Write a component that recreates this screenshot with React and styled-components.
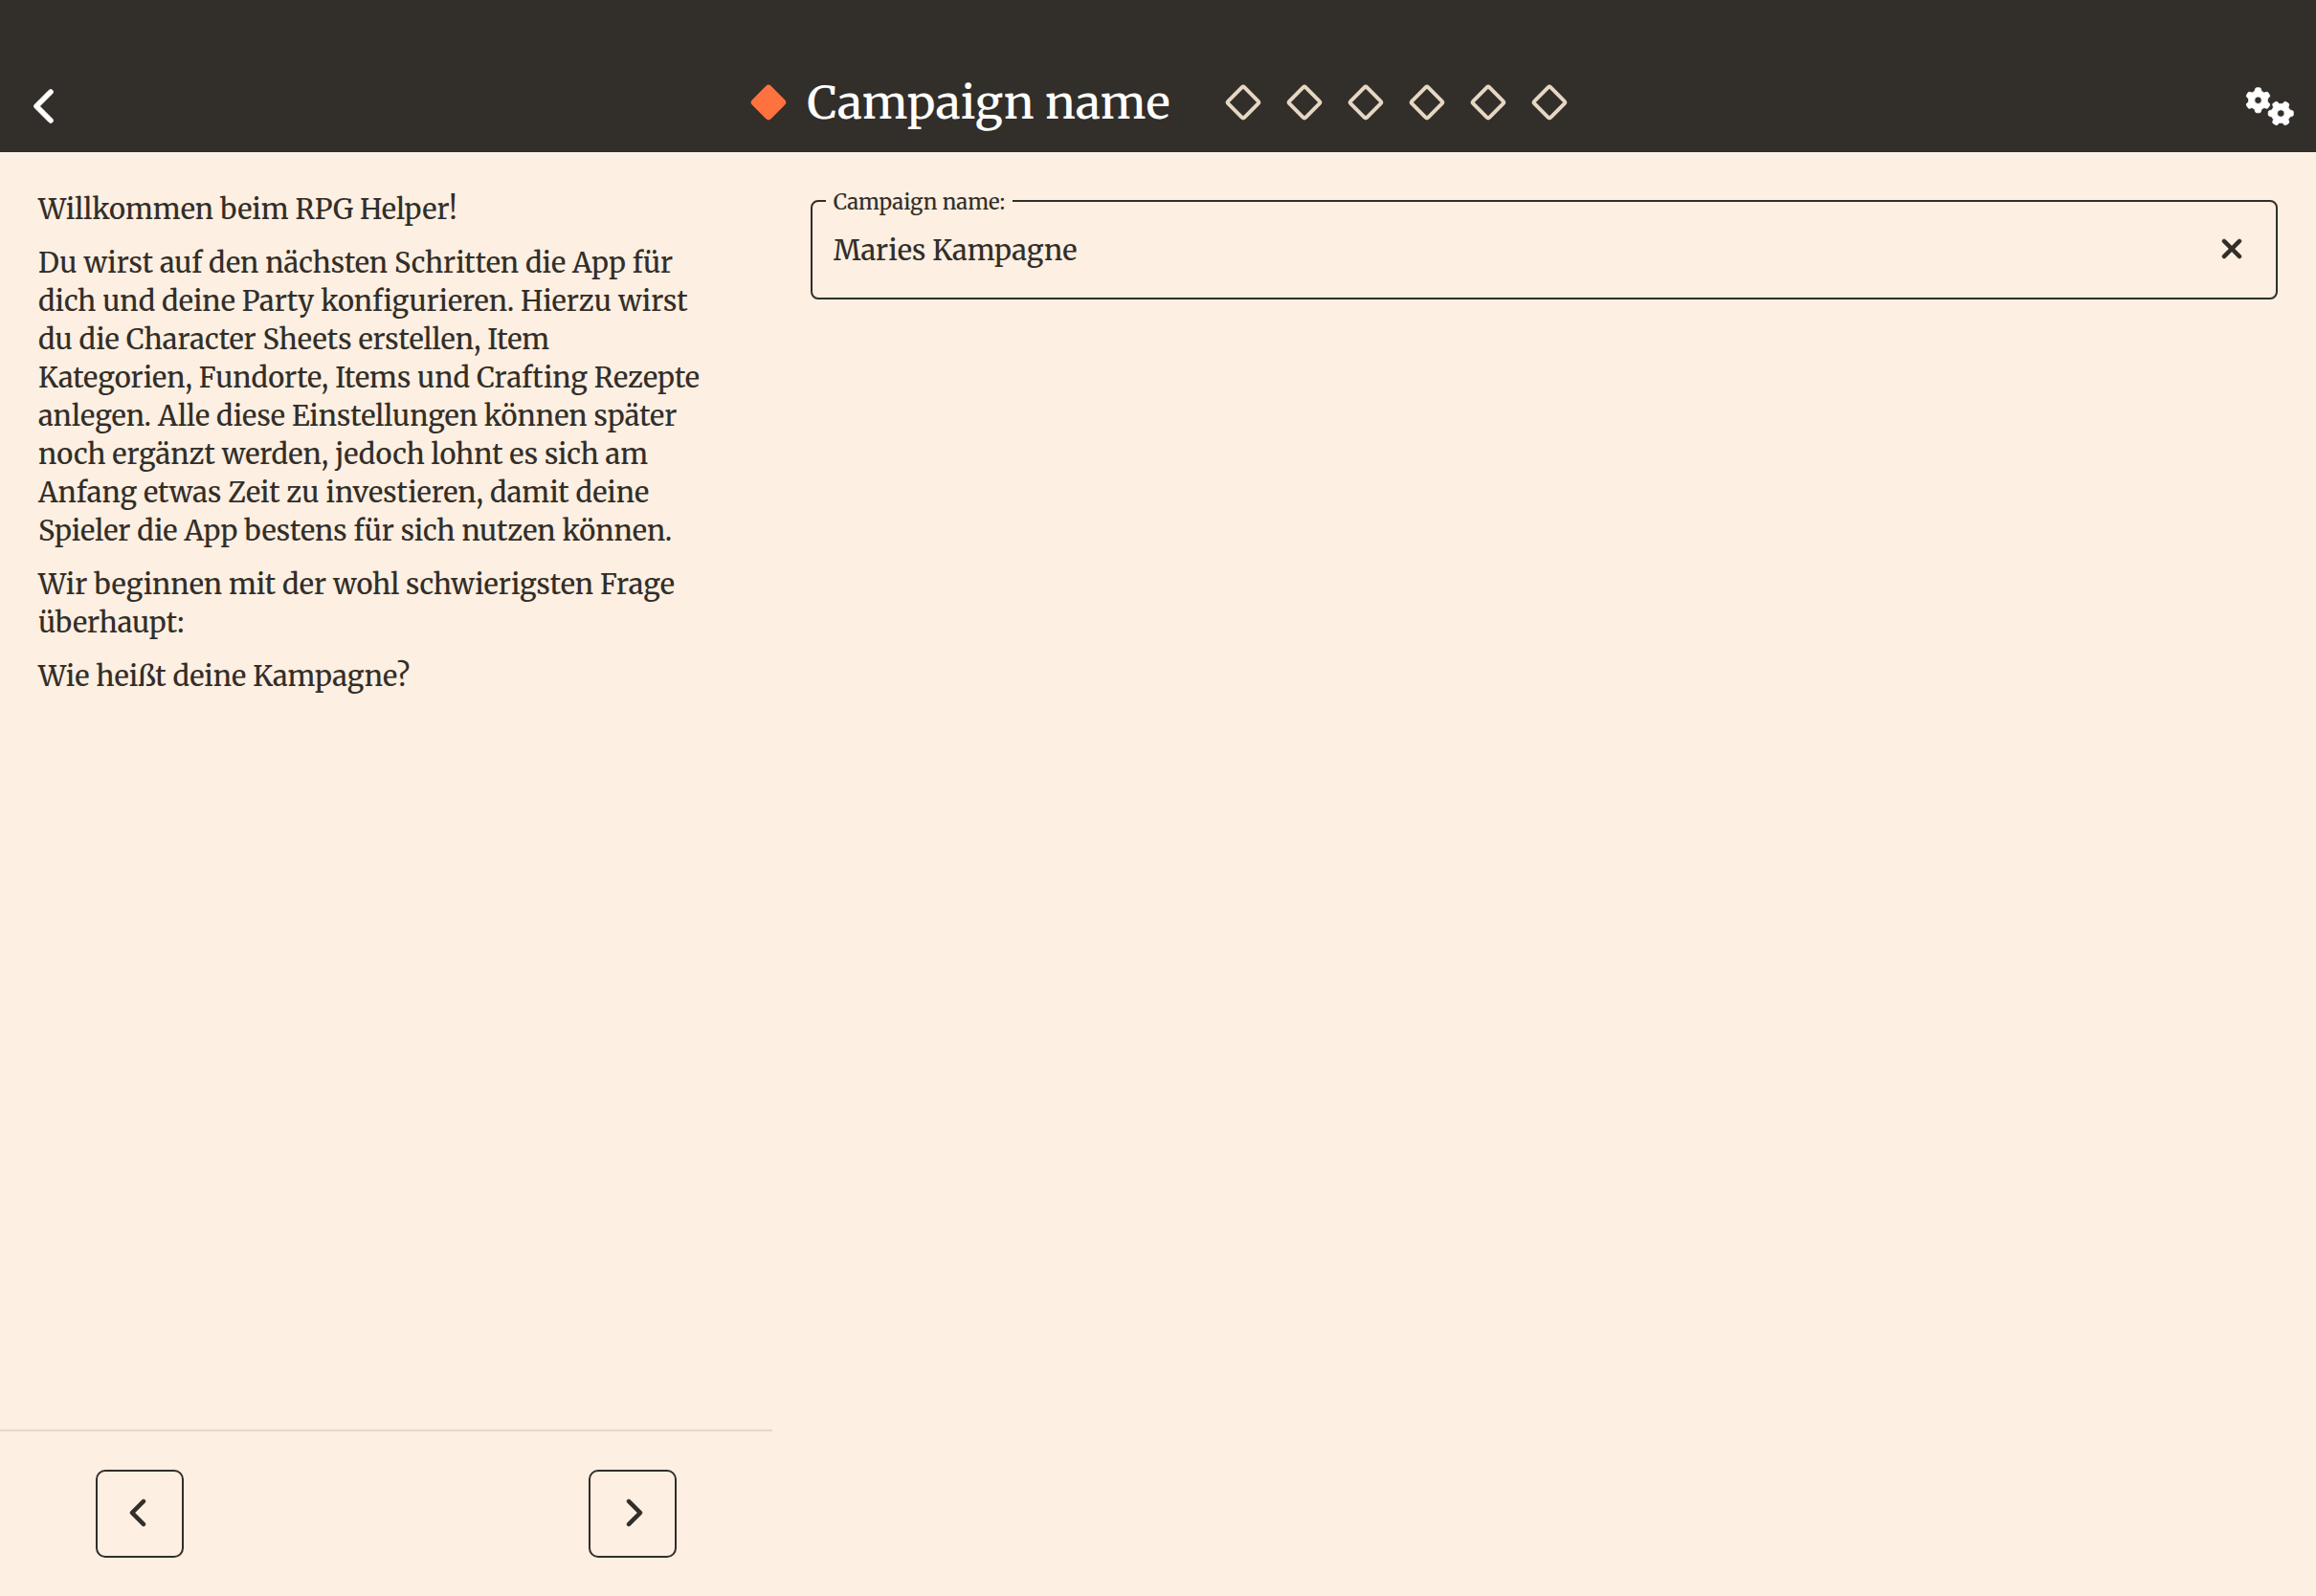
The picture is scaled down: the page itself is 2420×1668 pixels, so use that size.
import React, { useState } from "react";
import styled, { createGlobalStyle, css } from "styled-components";
import { FaChevronLeft, FaChevronRight, FaXmark, FaGears } from "react-icons/fa6";

const colors = {
  dark: "#322e29",
  paper: "#fdefe1",
  sand: "#e6d7c3",
  accent: "#fe7240",
  white: "#ffffff",
};

const GlobalStyle = createGlobalStyle`
  *, *::before, *::after { box-sizing: border-box; }
  body {
    margin: 0;
    background: ${colors.paper};
    color: ${colors.dark};
    font-family: Merriweather, "DejaVu Serif Condensed", "DejaVu Serif", serif;
    font-size: 29px;
    font-weight: 500;
    line-height: 40px;
  }
  button, input { font: inherit; color: inherit; }
`;

const Page = styled.div`
  display: flex;
  flex-direction: column;
  min-height: 100vh;
`;

const Header = styled.header`
  display: grid;
  grid-template-columns: 1fr auto 1fr;
  padding: 63px 23px 0 25px;
  background: ${colors.dark};
  color: ${colors.white};
`;

const IconButton = styled.button`
  display: flex;
  align-items: center;
  justify-content: center;
  padding: 0;
  border: 0;
  background: none;
  cursor: pointer;

  svg {
    overflow: visible;
    stroke-width: 10px;
  }
`;

const HeaderButton = styled(IconButton)`
  height: 96px;
  justify-self: ${({ $side }) => $side};

  svg {
    width: ${({ $iconWidth }) => $iconWidth}px;
    height: 40px;
  }
`;

const Steps = styled.ol`
  display: flex;
  align-items: center;
  gap: 36px;
  height: 88px;
  margin: 0;
  padding: 0;
  list-style: none;
`;

const Step = styled.li`
  display: flex;
  align-items: center;
  gap: 26px;
  ${({ $active }) => $active && css`margin-right: 26px;`}
`;

const Diamond = styled.span`
  width: 28px;
  height: 28px;
  border: 4px solid ${({ $active }) => ($active ? colors.accent : colors.sand)};
  border-radius: 4px;
  background: ${({ $active }) => ($active ? colors.accent : "transparent")};
  transform: rotate(45deg);
`;

const Title = styled.h1`
  margin: 0;
  font-size: 48px;
  font-weight: 500;
  line-height: 64px;
`;

const Main = styled.main`
  display: grid;
  grid-template-columns: 1fr 2fr;
  flex: 1;
`;

const Sidebar = styled.aside`
  display: flex;
  flex-direction: column;
`;

const Intro = styled.div`
  display: flex;
  flex: 1;
  flex-direction: column;
  gap: 16px;
  padding: 40px 48px 40px 40px;
`;

const Paragraph = styled.p`
  margin: 0;
`;

const Pager = styled.nav`
  display: flex;
  justify-content: space-between;
  padding: 40px 100px;
  border-top: 2px solid ${colors.sand};
`;

const PagerButton = styled(IconButton)`
  width: 92px;
  height: 92px;
  border: 2px solid ${colors.dark};
  border-radius: 10px;

  svg {
    width: 32px;
    height: 32px;
    margin-bottom: 2px;
  }
`;

const Form = styled.form`
  padding: 50px 40px;
`;

const Field = styled.div`
  position: relative;
  display: flex;
  align-items: center;
  height: 104px;
  padding: 0 30px 0 22px;
  border: 2px solid ${colors.dark};
  border-radius: 8px;
`;

const Label = styled.label`
  position: absolute;
  top: -15px;
  left: 14px;
  padding: 0 8px;
  background: ${colors.paper};
  font-size: 22px;
  line-height: 30px;
`;

const Input = styled.input`
  flex: 1;
  min-width: 0;
  height: 100px;
  padding: 0;
  border: 0;
  outline: 0;
  background: none;
`;

const ClearButton = styled(IconButton)`
  svg {
    width: 32px;
    height: 32px;
    margin-bottom: 2px;
  }
`;

const steps = ["Campaign name", "2", "3", "4", "5", "6", "7"];

export default function App() {
  const [name, setName] = useState("Maries Kampagne");

  return (
    <>
      <GlobalStyle />
      <Page>
        <Header>
          <HeaderButton type="button" aria-label="Zurück" $side="start" $iconWidth={46}>
            <FaChevronLeft />
          </HeaderButton>
          <Steps>
            {steps.map((step, index) => (
              <Step key={step} $active={index === 0}>
                <Diamond $active={index === 0} />
                {index === 0 && <Title>{step}</Title>}
              </Step>
            ))}
          </Steps>
          <HeaderButton type="button" aria-label="Einstellungen" $side="end" $iconWidth={50}>
            <FaGears />
          </HeaderButton>
        </Header>
        <Main>
          <Sidebar>
            <Intro>
              <Paragraph>Willkommen beim RPG Helper!</Paragraph>
              <Paragraph>
                Du wirst auf den nächsten Schritten die App für dich und deine Party
                konfigurieren. Hierzu wirst du die Character Sheets erstellen, Item
                <br />
                Kategorien, Fundorte, Items und Crafting Rezepte anlegen. Alle diese
                Einstellungen können später noch ergänzt werden, jedoch lohnt es sich am
                Anfang etwas Zeit zu investieren, damit deine Spieler die App bestens für
                sich nutzen können.
              </Paragraph>
              <Paragraph>Wir beginnen mit der wohl schwierigsten Frage überhaupt:</Paragraph>
              <Paragraph>Wie heißt deine Kampagne?</Paragraph>
            </Intro>
            <Pager>
              <PagerButton type="button" aria-label="Vorheriger Schritt">
                <FaChevronLeft />
              </PagerButton>
              <PagerButton type="button" aria-label="Nächster Schritt">
                <FaChevronRight />
              </PagerButton>
            </Pager>
          </Sidebar>
          <Form onSubmit={(event) => event.preventDefault()}>
            <Field>
              <Label htmlFor="campaign-name">Campaign name:</Label>
              <Input
                id="campaign-name"
                type="text"
                value={name}
                onChange={(event) => setName(event.target.value)}
              />
              <ClearButton type="button" aria-label="Leeren" onClick={() => setName("")}>
                <FaXmark />
              </ClearButton>
            </Field>
          </Form>
        </Main>
      </Page>
    </>
  );
}
